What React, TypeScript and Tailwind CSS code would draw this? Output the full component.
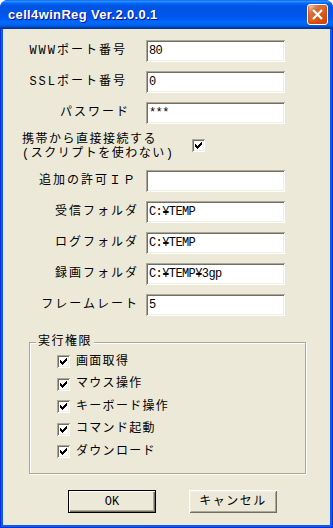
import React from 'react';

// classic 3D edges with the Luna system colours
const sunken =
  'shadow-[inset_1px_1px_#aca899,inset_-1px_-1px_#ffffff,inset_2px_2px_#716f64,inset_-2px_-2px_#f1efe2]';

const Check = () => (
  <svg width="7" height="7" viewBox="0 0 7 7" shapeRendering="crispEdges" fill="#000">
    <rect x="6" y="0" width="1" height="1" />
    <rect x="5" y="1" width="2" height="1" />
    <rect x="0" y="2" width="1" height="1" />
    <rect x="4" y="2" width="3" height="1" />
    <rect x="0" y="3" width="2" height="1" />
    <rect x="3" y="3" width="3" height="1" />
    <rect x="0" y="4" width="5" height="1" />
    <rect x="1" y="5" width="3" height="1" />
    <rect x="2" y="6" width="1" height="1" />
  </svg>
);

const CheckBox = () => (
  <span className={`flex h-[13px] w-[13px] shrink-0 items-center justify-center bg-white ${sunken}`}>
    <Check />
  </span>
);

const Field = ({ label, value, pr }: { label: string; value: string; pr: string }) => (
  <div className="flex h-[22px] items-center">
    <div className={`w-[143px] text-right tracking-[2px] ${pr}`}>{label}</div>
    <div
      className={`flex h-[22px] w-[139px] items-center bg-white pl-[3px] text-[12px] tracking-[-0.6px] ${sunken}`}
    >
      {value}
    </div>
  </div>
);

const perms = ['画面取得', 'マウス操作', 'キーボード操作', 'コマンド起動', 'ダウンロード'];

export default function App() {
  return (
    <div className="flex h-[528px] w-[333px] flex-col overflow-hidden rounded-t-[8px] bg-[#0831d9] font-['Liberation_Mono','Noto_Sans_CJK_JP',monospace] text-[12px] leading-[14px] text-black">
      {/* title bar */}
      <div className="flex h-[29px] shrink-0 items-center justify-between bg-[linear-gradient(180deg,#0058ee_0%,#3593ff_4%,#288eff_6%,#127dff_8%,#036ffc_10%,#0262ee_14%,#0057e5_20%,#0054e3_24%,#0055eb_56%,#005bf5_66%,#026afe_76%,#0062ef_86%,#0052d6_92%,#0040ab_94%,#003092_100%)] pl-[8px] pr-[5px]">
        <span className="pt-[1px] font-['Liberation_Sans',Arial,sans-serif] text-[13px] font-bold tracking-[0.35px] text-white [text-shadow:1px_1px_#0f1089]">
          cell4winReg Ver.2.0.0.1
        </span>
        <button className="flex h-[21px] w-[21px] items-center justify-center rounded-[3px] border border-white bg-[radial-gradient(circle_at_90%_90%,#cc4600_0%,#dc6527_55%,#cd7546_70%,#ffccb2_90%,#ffffff_100%)] shadow-[inset_0_-1px_2px_1px_#da4600]">
          <svg width="11" height="11" viewBox="0 0 11 11">
            <path d="M1 1 L10 10 M10 1 L1 10" stroke="#fff" strokeWidth="2.2" />
          </svg>
        </button>
      </div>

      {/* frame */}
      <div className="flex flex-1 flex-col px-[1px] pb-[1px]">
        <div className="flex flex-1 flex-col bg-[#0d5cf2] px-[2px] pb-[2px]">
          <div className="flex flex-1 flex-col bg-[#ece9d8] pt-[11px]">
            <div className="flex flex-col gap-[9px]">
              <Field label="WWWポート番号" value="80" pr="pr-[19px]" />
              <Field label="SSLポート番号" value="0" pr="pr-[19px]" />
              <Field label="パスワード" value="***" pr="pr-[16px]" />
            </div>

            <div className="mt-[9px] flex h-[28px] items-start pl-[19px]">
              <div className="w-[170px] tracking-[1.5px]">
                <div>携帯から直接接続する</div>
                <div>(スクリプトを使わない)</div>
              </div>
              <span className="mt-[6px]">
                <CheckBox />
              </span>
            </div>

            <div className="mt-[9px] flex flex-col gap-[9px]">
              <Field label="追加の許可ＩＰ" value="" pr="pr-[9px]" />
              <Field label="受信フォルダ" value="C:¥TEMP" pr="pr-[7px]" />
              <Field label="ログフォルダ" value="C:¥TEMP" pr="pr-[7px]" />
              <Field label="録画フォルダ" value="C:¥TEMP¥3gp" pr="pr-[7px]" />
              <Field label="フレームレート" value="5" pr="pr-[7px]" />
            </div>

            {/* group box */}
            <div className="relative ml-[26px] mt-[26px] w-[277px] border border-[#aca899] pb-[10px] pl-[27px] pt-[7.5px] shadow-[inset_1px_1px_#ffffff,1px_1px_#ffffff]">
              <span className="absolute left-[6px] top-[-8px] bg-[#ece9d8] px-[2px] tracking-[1.5px]">
                実行権限
              </span>
              {perms.map((p) => (
                <div key={p} className="flex h-[22.5px] items-center gap-[6px] tracking-[1.3px]">
                  <CheckBox />
                  <span>{p}</span>
                </div>
              ))}
            </div>

            <div className="mt-[16px] flex gap-[33px] pl-[65px]">
              <button className="flex h-[23px] w-[88px] items-center justify-center border border-black shadow-[inset_1px_1px_#ffffff,inset_-1px_-1px_#716f64,inset_-2px_-2px_#aca899]">
                OK
              </button>
              <button className="flex h-[23px] w-[88px] items-center justify-center shadow-[inset_1px_1px_#ffffff,inset_-1px_-1px_#716f64,inset_2px_2px_#f1efe2,inset_-2px_-2px_#aca899] tracking-[1.5px]">
                キャンセル
              </button>
            </div>
          </div>
        </div>
      </div>
    </div>
  );
}
